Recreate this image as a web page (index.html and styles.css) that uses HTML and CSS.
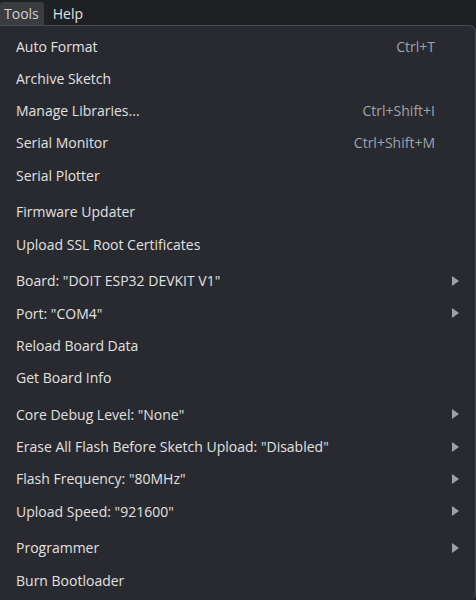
FILE: index.html
```html
<!DOCTYPE html>
<html>
<head>
<meta charset="utf-8">
<link rel="stylesheet" href="styles.css">
</head>
<body>
<div class="menubar">
  <span class="top-item active">Tools</span>
  <span class="top-item">Help</span>
</div>
<div class="menu">
  <div class="row"><span class="label">Auto Format</span><span class="key">Ctrl+T</span></div>
  <div class="row"><span class="label">Archive Sketch</span></div>
  <div class="row"><span class="label">Manage Libraries...</span><span class="key">Ctrl+Shift+I</span></div>
  <div class="row"><span class="label">Serial Monitor</span><span class="key">Ctrl+Shift+M</span></div>
  <div class="row"><span class="label">Serial Plotter</span></div>
  <div class="sep"></div>
  <div class="row"><span class="label">Firmware Updater</span></div>
  <div class="row"><span class="label">Upload SSL Root Certificates</span></div>
  <div class="sep"></div>
  <div class="row sub"><span class="label">Board: "DOIT ESP32 DEVKIT V1"</span><span class="arrow"></span></div>
  <div class="row sub"><span class="label">Port: "COM4"</span><span class="arrow"></span></div>
  <div class="row"><span class="label">Reload Board Data</span></div>
  <div class="row"><span class="label">Get Board Info</span></div>
  <div class="sep"></div>
  <div class="row sub"><span class="label">Core Debug Level: "None"</span><span class="arrow"></span></div>
  <div class="row sub"><span class="label">Erase All Flash Before Sketch Upload: "Disabled"</span><span class="arrow"></span></div>
  <div class="row sub"><span class="label">Flash Frequency: "80MHz"</span><span class="arrow"></span></div>
  <div class="row sub"><span class="label">Upload Speed: "921600"</span><span class="arrow"></span></div>
  <div class="sep"></div>
  <div class="row sub"><span class="label">Programmer</span><span class="arrow"></span></div>
  <div class="row"><span class="label">Burn Bootloader</span></div>
</div>
</body>
</html>
```
FILE: styles.css
```css
html, body {
  margin: 0;
  padding: 0;
  background: #202124;
  width: 476px;
  height: 600px;
  overflow: hidden;
  font-family: "Open Sans", "Noto Sans", sans-serif;
  font-size: 14px;
  color: #dcdcdc;
}
.menubar {
  height: 25px;
  display: flex;
  align-items: flex-end;
  gap: 5px;
  background: #1f2023;
}
.top-item {
  height: 23px;
  line-height: 23px;
  padding: 0 5px 0 4px;
  color: #e2e2e2;
}
.top-item.active {
  background: #3b3c40;
  border-radius: 3px 3px 0 0;
  color: #d0d0d0;
}
.menu {
  box-sizing: border-box;
  background: #292a2f;
  border-top: 1px solid #4a4c52;
  border-right: 1px solid #4a4c52;
  border-radius: 0 7px 7px 0;
  padding-top: 4px;
  height: 575px;
}
.row {
  height: 32.25px;
  display: flex;
  align-items: center;
  padding: 0 40px 0 16px;
  position: relative;
}
.label {
  flex: 1;
  white-space: nowrap;
  color: #e1e1e1;
}
.key {
  color: #9ea4ab;
  white-space: nowrap;
}
.sep {
  height: 4.5px;
}
.arrow {
  position: absolute;
  right: 16px;
  top: 50%;
  margin-top: -5px;
  width: 0;
  height: 0;
  border-top: 5px solid transparent;
  border-bottom: 5px solid transparent;
  border-left: 7px solid #9d9fa3;
}
```
